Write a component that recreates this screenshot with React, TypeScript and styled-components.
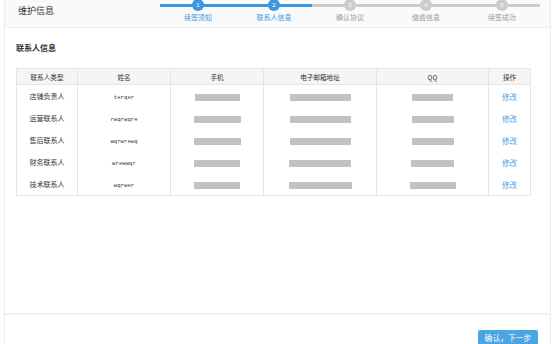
import React from 'react';
import styled, { createGlobalStyle } from 'styled-components';

const GlobalStyle = createGlobalStyle`
  html, body {
    margin: 0;
    padding: 0;
    background: #fff;
  }
  body {
    font-family: "Noto Sans CJK SC", "Noto Sans", sans-serif;
    color: #333;
  }
`;

interface Step {
  label: string;
  done: boolean;
}

const steps: Step[] = [
  { label: '续签须知', done: true },
  { label: '联系人信息', done: true },
  { label: '确认协议', done: false },
  { label: '缴费信息', done: false },
  { label: '续签成功', done: false },
];

interface Contact {
  type: string;
  name: string;
  phone: number;
  email: number;
  qq: number;
}

const contacts: Contact[] = [
  { type: '店铺负责人', name: 'terqer', phone: 45, email: 61, qq: 41 },
  { type: '运营联系人', name: 'rwqrwqre', phone: 47, email: 61, qq: 42 },
  { type: '售后联系人', name: 'wqrwrewq', phone: 47, email: 61, qq: 42 },
  { type: '财务联系人', name: 'wrewwqr', phone: 46, email: 62, qq: 43 },
  { type: '技术联系人', name: 'wqrwer', phone: 46, email: 63, qq: 46 },
];

const columns = [
  { label: '联系人类型', width: 61 },
  { label: '姓名', width: 93 },
  { label: '手机', width: 93 },
  { label: '电子邮箱地址', width: 113 },
  { label: 'QQ', width: 112 },
  { label: '操作', width: 42 },
];

const blue = '#3c97dd';

const Page = styled.div`
  box-sizing: border-box;
  margin-left: 4px;
  width: 547px;
  height: 344px;
  overflow: hidden;
  border-left: 1px solid #ececec;
  border-right: 1px solid #ececec;
  display: flex;
  flex-direction: column;
`;

const Header = styled.header`
  height: 27px;
  flex-shrink: 0;
  background: #fafafa;
  border-bottom: 1px solid #efefef;
  display: flex;
  align-items: flex-start;
`;

const PageTitle = styled.h1`
  margin: 5px 0 0 13px;
  font-size: 9px;
  line-height: 12px;
  font-weight: normal;
  color: #333;
`;

const Steps = styled.ol`
  list-style: none;
  margin: 0 10px 0 auto;
  padding: 0;
  display: flex;
`;

const StepItem = styled.li<{ $done: boolean }>`
  width: 76px;
  position: relative;
  display: flex;
  flex-direction: column;
  align-items: center;
  color: ${({ $done }) => ($done ? blue : '#999')};

  &::before {
    content: '';
    position: absolute;
    left: 0;
    right: 0;
    top: 4px;
    height: 3px;
    background: ${({ $done }) => ($done ? blue : '#ccc')};
  }
`;

const StepDot = styled.span<{ $done: boolean }>`
  position: relative;
  width: 12px;
  height: 12px;
  margin-top: -1px;
  border-radius: 50%;
  background: ${({ $done }) => ($done ? blue : '#ccc')};
  color: #fff;
  font-family: "Liberation Sans", sans-serif;
  font-size: 6px;
  line-height: 12px;
  text-align: center;
`;

const StepLabel = styled.span`
  margin-top: 1px;
  font-size: 7px;
  line-height: 10px;
  white-space: nowrap;
`;

const Content = styled.main`
  box-sizing: border-box;
  height: 285px;
  flex-shrink: 0;
  padding: 15px 20px 0 11px;
`;

const SectionTitle = styled.h2`
  margin: 0 0 15px 0;
  font-size: 8px;
  line-height: 10px;
  font-weight: bold;
  color: #333;
`;

const Table = styled.table`
  width: 514px;
  table-layout: fixed;
  border-collapse: collapse;
  border-bottom: 1px solid #e6e6e6;
`;

const HeadCell = styled.th`
  height: 15px;
  padding: 0;
  background: #f5f5f5;
  border: 1px solid #e6e6e6;
  font-size: 6.6px;
  font-weight: normal;
  color: #333;
  text-align: center;
`;

const Cell = styled.td`
  height: 22px;
  padding: 0;
  border-left: 1px solid #e6e6e6;
  border-right: 1px solid #e6e6e6;
  font-size: 7px;
  color: #333;
  text-align: center;
  vertical-align: middle;
`;

const NameText = styled.span`
  font-family: "Liberation Mono", monospace;
  font-size: 5.5px;
  letter-spacing: 0.1px;
`;

const Redacted = styled.span<{ $width: number }>`
  display: inline-block;
  vertical-align: middle;
  width: ${({ $width }) => $width}px;
  height: 7px;
  background: #c2c2c2;
`;

const EditLink = styled.a`
  font-size: 7.5px;
  color: #4aa3e5;
  text-decoration: none;
`;

const Footer = styled.footer`
  border-top: 2px solid #f0f0f0;
  padding: 15px 12px 0 0;
  display: flex;
  justify-content: flex-end;
`;

const PrimaryButton = styled.button`
  width: 60px;
  height: 20px;
  border: none;
  border-radius: 2px;
  background: #4ba5e2;
  color: #fff;
  font-family: "Noto Sans CJK SC", sans-serif;
  font-size: 7.8px;
  padding: 0 0 4px 0;
  line-height: 16px;
  text-align: center;
  align-self: flex-start;
`;

const App: React.FC = () => (
  <>
    <GlobalStyle />
    <Page>
      <Header>
        <PageTitle>维护信息</PageTitle>
        <Steps>
          {steps.map((step, i) => (
            <StepItem key={step.label} $done={step.done}>
              <StepDot $done={step.done}>{i + 1}</StepDot>
              <StepLabel>{step.label}</StepLabel>
            </StepItem>
          ))}
        </Steps>
      </Header>
      <Content>
        <SectionTitle>联系人信息</SectionTitle>
        <Table>
          <colgroup>
            {columns.map(col => (
              <col key={col.label} style={{ width: col.width }} />
            ))}
          </colgroup>
          <thead>
            <tr>
              {columns.map(col => (
                <HeadCell key={col.label}>{col.label}</HeadCell>
              ))}
            </tr>
          </thead>
          <tbody>
            {contacts.map(c => (
              <tr key={c.type}>
                <Cell>{c.type}</Cell>
                <Cell>
                  <NameText>{c.name}</NameText>
                </Cell>
                <Cell>
                  <Redacted $width={c.phone} />
                </Cell>
                <Cell>
                  <Redacted $width={c.email} />
                </Cell>
                <Cell>
                  <Redacted $width={c.qq} />
                </Cell>
                <Cell>
                  <EditLink href="#">修改</EditLink>
                </Cell>
              </tr>
            ))}
          </tbody>
        </Table>
      </Content>
      <Footer>
        <PrimaryButton>确认，下一步</PrimaryButton>
      </Footer>
    </Page>
  </>
);

export default App;
